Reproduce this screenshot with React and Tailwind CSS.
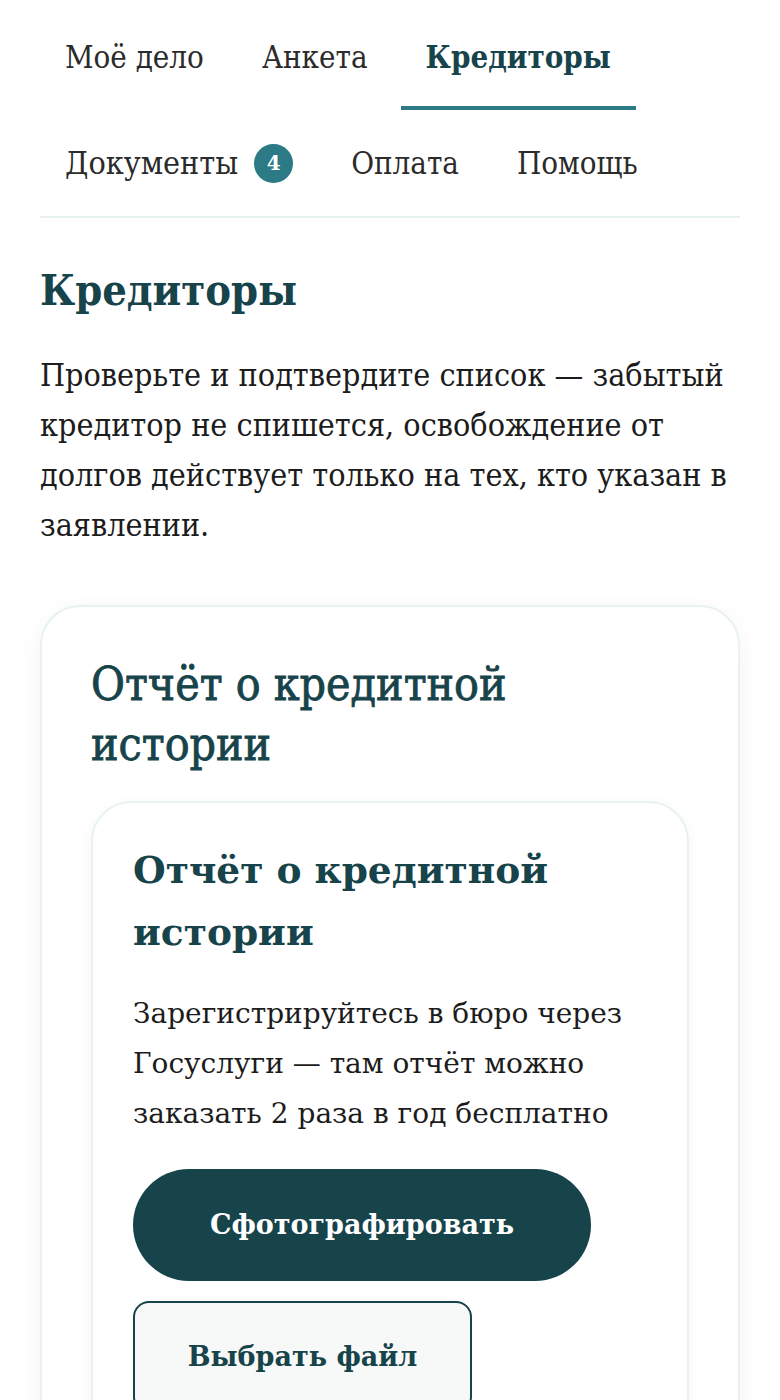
import React from 'react';

const cond = { fontFamily: '"DejaVu Serif Condensed", "DejaVu Serif", serif' };
const wide = { fontFamily: '"DejaVu Serif", serif' };

function NavTab({ label, active, badge }) {
  return (
    <div className="relative flex items-center h-[106px] px-[25px]">
      <span
        className={
          active
            ? 'text-[31px] font-bold text-[#17434a]'
            : badge
              ? 'text-[32px] text-[#2b2b2b]'
              : 'text-[31px] text-[#2b2b2b]'
        }
      >
        {label}
      </span>
      {badge && (
        <span
          className="ml-[16px] flex items-center justify-center w-[39px] h-[39px] rounded-full bg-[#2b7a85] text-white text-[20px] font-bold"
          style={wide}
        >
          {badge}
        </span>
      )}
      {active && <span className="absolute left-0 right-0 bottom-0 h-[4px] bg-[#2b7a85]" />}
    </div>
  );
}

function App() {
  return (
    <div className="min-h-screen bg-white" style={cond}>
      <div className="px-[40px]">
        <nav className="pt-[4px] border-b-2 border-[#e8f1f1]">
          <div className="flex flex-wrap gap-x-[8px]">
            <NavTab label="Моё дело" />
            <NavTab label="Анкета" />
            <NavTab label="Кредиторы" active />
            <NavTab label="Документы" badge="4" />
            <NavTab label="Оплата" />
            <NavTab label="Помощь" />
          </div>
        </nav>

        <h1 className="mt-[44px] text-[43px] leading-[56px] font-bold text-[#17434a]">Кредиторы</h1>
        <p className="mt-[32px] text-[32px] leading-[50px] text-[#1c1c1c]">
          Проверьте и подтвердите список — забытый кредитор не спишется, освобождение от долгов действует только на тех, кто указан в заявлении.
        </p>

        <section className="mt-[55px] rounded-[40px] border-2 border-[#e8f2f2] bg-white shadow-[0_6px_24px_rgba(0,0,0,0.05)] px-[49px] pt-[47px] pb-[40px]">
          <h2 className="max-w-[540px] text-[46px] leading-[60px] text-[#17434a] [-webkit-text-stroke:0.8px_#17434a]">
            Отчёт о кредитной истории
          </h2>
          <div
            className="mt-[27px] rounded-[40px] border-2 border-[#e8f2f2] bg-white shadow-[0_4px_18px_rgba(0,0,0,0.04)] px-[40px] pt-[36px] pb-[40px]"
            style={wide}
          >
            <h3 className="text-[37.5px] leading-[62px] font-bold text-[#17434a]">Отчёт о кредитной истории</h3>
            <p className="mt-[26px] text-[28px] leading-[50px] text-[#1c1c1c]">
              Зарегистрируйтесь в бюро через Госуслуги — там отчёт можно заказать 2 раза в год бесплатно
            </p>
            <div className="mt-[30px] flex flex-col items-start gap-[20px]">
              <button className="h-[112px] w-[458px] rounded-full bg-[#17434a] text-white text-[27px] font-bold">
                Сфотографировать
              </button>
              <button className="h-[112px] w-[339px] rounded-[16px] border-2 border-[#17434a] bg-[#f7f8f8] text-[#17434a] text-[27px] font-bold">
                Выбрать файл
              </button>
            </div>
          </div>
        </section>
      </div>
    </div>
  );
}

export default App;
